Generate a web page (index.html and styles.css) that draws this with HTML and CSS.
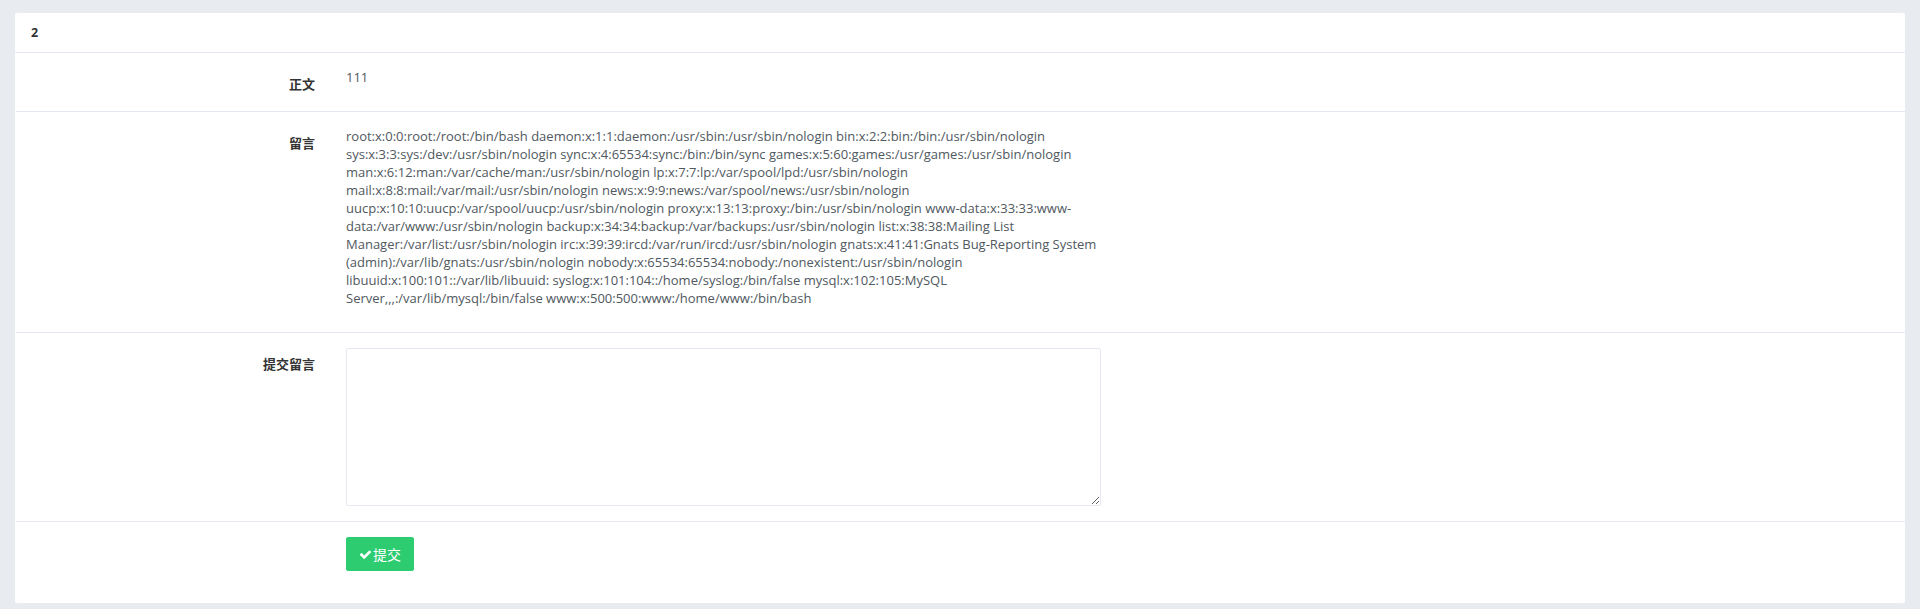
FILE: index.html
```html
<!DOCTYPE html>
<html lang="zh">
<head>
<meta charset="utf-8">
<title>2</title>
<link rel="stylesheet" href="styles.css">
</head>
<body>
<div class="panel">
  <div class="panel-heading">2</div>
  <div class="row">
    <div class="label">正文</div>
    <div class="value"><p>111</p></div>
  </div>
  <div class="row">
    <div class="label">留言</div>
    <div class="value value-wide"><p>root:x:0:0:root:/root:/bin/bash daemon:x:1:1:daemon:/usr/sbin:/usr/sbin/nologin bin:x:2:2:bin:/bin:/usr/sbin/nologin sys:x:3:3:sys:/dev:/usr/sbin/nologin sync:x:4:65534:sync:/bin:/bin/sync games:x:5:60:games:/usr/games:/usr/sbin/nologin man:x:6:12:man:/var/cache/man:/usr/sbin/nologin lp:x:7:7:lp:/var/spool/lpd:/usr/sbin/nologin mail:x:8:8:mail:/var/mail:/usr/sbin/nologin news:x:9:9:news:/var/spool/news:/usr/sbin/nologin uucp:x:10:10:uucp:/var/spool/uucp:/usr/sbin/nologin proxy:x:13:13:proxy:/bin:/usr/sbin/nologin www-data:x:33:33:www-data:/var/www:/usr/sbin/nologin backup:x:34:34:backup:/var/backups:/usr/sbin/nologin list:x:38:38:Mailing List Manager:/var/list:/usr/sbin/nologin irc:x:39:39:ircd:/var/run/ircd:/usr/sbin/nologin gnats:x:41:41:Gnats Bug-Reporting System (admin):/var/lib/gnats:/usr/sbin/nologin nobody:x:65534:65534:nobody:/nonexistent:/usr/sbin/nologin libuuid:x:100:101::/var/lib/libuuid: syslog:x:101:104::/home/syslog:/bin/false mysql:x:102:105:MySQL Server,,,:/var/lib/mysql:/bin/false www:x:500:500:www:/home/www:/bin/bash</p></div>
  </div>
  <div class="row row-form">
    <div class="label">提交留言</div>
    <div class="value"><textarea class="textarea"></textarea></div>
  </div>
  <div class="row row-last">
    <div class="label"></div>
    <div class="value">
      <button class="btn-success" type="button"><svg class="check" viewBox="0 0 1792 1792" width="13" height="13"><path fill="#fff" d="M1671 566q0 40-28 68l-724 724-136 136q-28 28-68 28t-68-28l-136-136-362-362q-28-28-28-68t28-68l136-136q28-28 68-28t68 28l294 295 656-657q28-28 68-28t68 28l136 136q28 28 28 68z"/></svg>提交</button>
    </div>
  </div>
</div>
</body>
</html>
```
FILE: styles.css
```css
html, body {
  margin: 0;
  padding: 0;
}
body {
  background: #e8ecf0;
  padding: 13px 15px 6px;
  font-family: "Open Sans", "Noto Sans CJK SC", sans-serif;
  font-size: 13px;
  line-height: 18px;
  color: #505860;
}
.panel {
  background: #fff;
  border-radius: 2px;
}
.panel-heading {
  height: 39px;
  line-height: 39px;
  padding: 0 16px;
  font-weight: 700;
  font-size: 12.5px;
  color: #333;
  border-bottom: 1px solid #e4e8ef;
}
.row {
  display: flex;
  gap: 31px;
  padding: 15px 0 15px;
  border-bottom: 1px solid #e4e8ef;
  margin-left: 1px;
}
.row-last {
  border-bottom: none;
  padding-bottom: 32px;
}
.label {
  flex: 0 0 299px;
  text-align: right;
  padding-top: 7px;
  font-weight: 700;
  font-size: 13px;
  color: #333;
}
.value p {
  margin: 0 0 10px;
}
.value-wide {
  width: 760px;
}
.textarea {
  display: block;
  box-sizing: border-box;
  width: 755px;
  height: 158px;
  border: 1px solid #e4e8ef;
  border-radius: 2px;
  margin: 0;
  padding: 6px 12px;
  font: inherit;
  resize: vertical;
}
.btn-success {
  display: inline-flex;
  align-items: center;
  height: 34px;
  width: 68px;
  padding: 0 0 0 12px;
  box-sizing: border-box;
  background: #2ecc71;
  border: 1px solid #2ecc71;
  border-radius: 2px;
  color: #fff;
  font-family: "Open Sans", "Noto Sans CJK SC", sans-serif;
  font-size: 14px;
  cursor: pointer;
}
.check {
  margin-right: 1px;
}
```
